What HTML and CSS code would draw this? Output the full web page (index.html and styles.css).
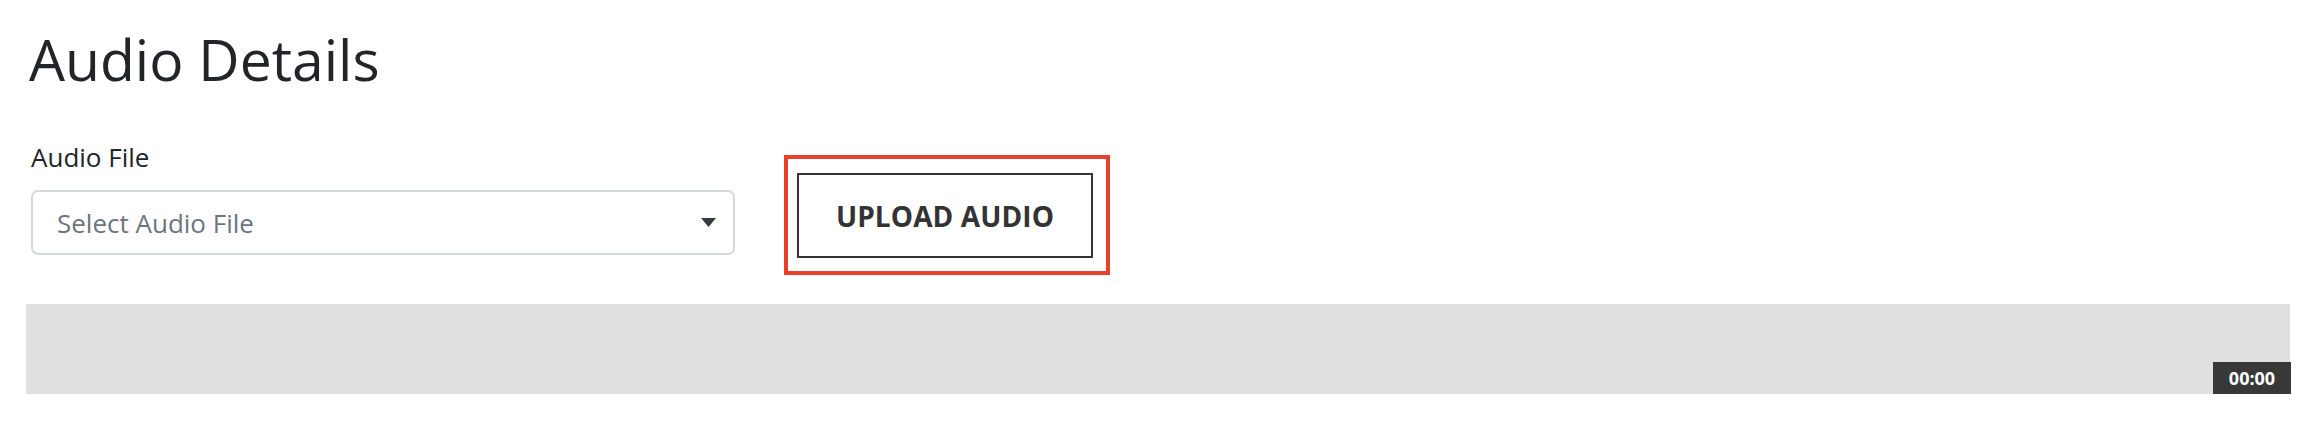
FILE: index.html
```html
<!DOCTYPE html>
<html lang="en">
<head>
<meta charset="utf-8">
<title>Audio Details</title>
<link rel="stylesheet" href="styles.css">
</head>
<body>
<div class="page">
  <h1 class="title">Audio Details</h1>
  <div class="form-row">
    <div class="field">
      <label class="field-label" for="audio-file">Audio File</label>
      <div class="select" id="audio-file">
        <span class="select-placeholder">Select Audio File</span>
        <svg class="select-caret" width="15" height="9" viewBox="0 0 15 9"><path d="M0 0H15L7.5 9Z" fill="#343a40"/></svg>
      </div>
    </div>
    <div class="highlight">
      <button class="upload-btn" type="button">UPLOAD AUDIO</button>
    </div>
  </div>
  <div class="waveform">
    <span class="time-badge">00:00</span>
  </div>
</div>
</body>
</html>
```

FILE: styles.css
```css
html, body {
  margin: 0;
  padding: 0;
  background: #ffffff;
}

body {
  font-family: "Open Sans", "Noto Sans", sans-serif;
  color: #212529;
}

.page {
  padding: 24px 22px 0 26px;
}

.title {
  margin: 0 0 0 3px;
  font-size: 57px;
  font-weight: 400;
  line-height: 70px;
  color: #212529;
}

.form-row {
  display: flex;
  align-items: flex-start;
  gap: 49px;
  margin-top: 46px;
  margin-left: 5px;
}

.field {
  display: flex;
  flex-direction: column;
  width: 704px;
}

.field-label {
  font-size: 26px;
  line-height: 34px;
  color: #212529;
  margin-bottom: 16px;
}

.select {
  box-sizing: border-box;
  height: 65px;
  border: 2px solid #d6d9dc;
  border-radius: 7px;
  display: flex;
  align-items: center;
  justify-content: space-between;
  padding: 0 17px 0 24px;
}

.select-placeholder {
  font-size: 26px;
  color: #6c757d;
}

.select-caret {
  display: block;
}

.highlight {
  margin-top: 15px;
  border: 4px solid #e8402a;
  padding: 14px 13px 13px 9px;
}

.upload-btn {
  display: block;
  box-sizing: border-box;
  width: 296px;
  height: 85px;
  border: 2px solid #333333;
  background: #ffffff;
  color: #333333;
  font-family: "Open Sans", "Noto Sans", sans-serif;
  font-size: 28px;
  font-weight: 700;
  letter-spacing: 0.1px;
  padding: 0;
}

.waveform {
  position: relative;
  margin-top: 29px;
  height: 90px;
  background: #e0e0e0;
}

.time-badge {
  position: absolute;
  right: -1px;
  bottom: 0;
  width: 78px;
  height: 32px;
  background: #383838;
  color: #ffffff;
  font-size: 18px;
  font-weight: 700;
  line-height: 32px;
  text-align: center;
}
```
